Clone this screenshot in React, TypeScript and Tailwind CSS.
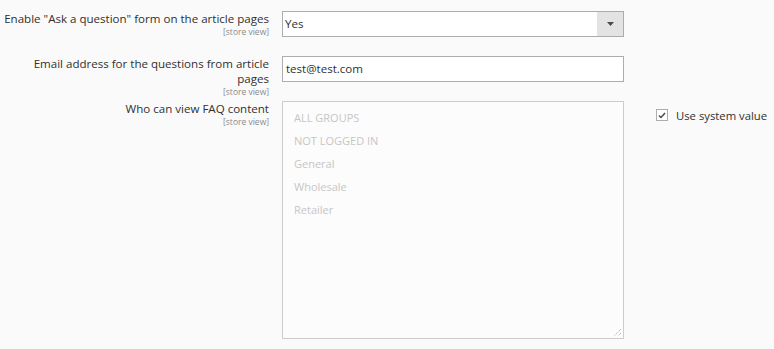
const groups = ['ALL GROUPS', 'NOT LOGGED IN', 'General', 'Wholesale', 'Retailer'];

function Label({ lines }: { lines: string[] }) {
  return (
    <div className="w-[270px] shrink-0 pr-[1px] text-right">
      {lines.map((l) => (
        <div key={l} className="text-[11.55px] leading-[15px] text-[#303030]">
          {l}
        </div>
      ))}
      <div className="text-[8.5px] leading-[10px] mt-[1px] text-[#8a8a8a]">[store view]</div>
    </div>
  );
}

export default function App() {
  return (
    <div className="w-[774px] h-[349px] bg-[#fafafa] font-['Open_Sans',sans-serif] overflow-hidden pt-[11px]">
      {/* Ask a question */}
      <div className="flex gap-[12px]">
        <Label lines={['Enable "Ask a question" form on the article pages']} />
        <div className="w-[342px] h-[26px] border border-[#adadad] bg-white flex">
          <div className="flex-1 pl-[2px] text-[11.55px] leading-[24px] text-[#303030]">Yes</div>
          <div className="w-[26px] bg-[#e3e3e3] flex items-center justify-center">
            <svg width="7" height="4" viewBox="0 0 7 4">
              <path d="M0 0h7L3.5 4z" fill="#514943" />
            </svg>
          </div>
        </div>
      </div>

      {/* Email */}
      <div className="flex gap-[12px] mt-[19px]">
        <Label lines={['Email address for the questions from article', 'pages']} />
        <div className="w-[342px] h-[26px] border border-[#adadad] bg-white pl-[3px] text-[11.55px] leading-[24px] text-[#303030]">
          test@test.com
        </div>
      </div>

      {/* Who can view */}
      <div className="flex gap-[12px] mt-[4px]">
        <Label lines={['Who can view FAQ content']} />
        <div className="relative w-[342px] h-[238px] shrink-0 border border-[#cccccc] bg-[#fcfcfc] pt-[4px] pl-[11px]">
          {groups.map((g) => (
            <div key={g} className="text-[11px] leading-[23px] font-medium text-[#c6c6c6]">
              {g}
            </div>
          ))}
          <svg className="absolute right-[1px] bottom-[1px]" width="9" height="9" viewBox="0 0 9 9">
            <path d="M8 1L1 8M8 5L5 8" stroke="#a0a0a0" strokeWidth="1" strokeDasharray="1 1" />
          </svg>
        </div>
        <label className="ml-[20px] mt-[7px] flex items-start gap-[8px] whitespace-nowrap text-[11.3px] leading-[15px] text-[#303030]">
          <span className="mt-[1px] w-[12px] h-[12px] border border-[#adadad] bg-white flex items-center justify-center">
            <svg width="8" height="7" viewBox="0 0 8 7">
              <path d="M1 3.5l2 2L7 1" fill="none" stroke="#514943" strokeWidth="1.5" />
            </svg>
          </span>
          Use system value
        </label>
      </div>
    </div>
  );
}
